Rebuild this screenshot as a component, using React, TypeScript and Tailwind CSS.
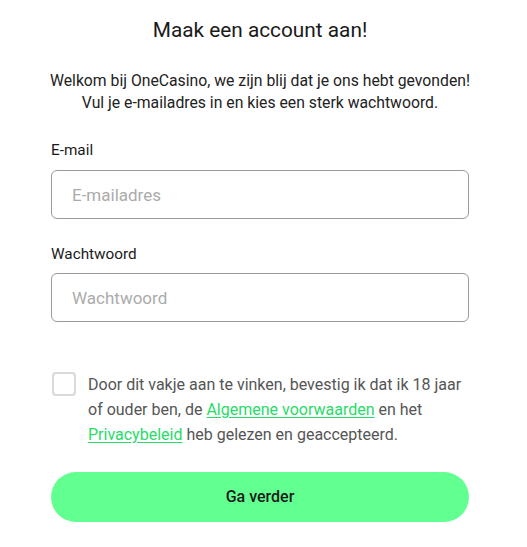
import React from 'react';

export default function App() {
  return (
    <div className="min-h-[547px] w-[527px] bg-white font-['Roboto',sans-serif]">
      <div className="ml-[51px] w-[418px] pt-4">
        <h1 className="text-center text-[20.8px] leading-[28px] text-[#1a1a1a]">Maak een account aan!</h1>

        <p className="-mx-6 mt-[26px] whitespace-nowrap text-center text-[15.75px] leading-[22px] text-[#222]">
          Welkom bij OneCasino, we zijn blij dat je ons hebt gevonden!
          <br />
          Vul je e-mailadres in en kies een sterk wachtwoord.
        </p>

        <form className="mt-[25px]" onSubmit={(e) => e.preventDefault()}>
          <label className="block text-[15.3px] leading-[22px] text-[#1a1a1a]">E-mail</label>
          <input
            type="email"
            placeholder="E-mailadres"
            className="mt-[9px] block h-[49px] w-full rounded-[6px] border border-[#9a9a9a] px-5 text-[17px] text-[#222] outline-none placeholder:text-[#ababab]"
          />

          <label className="mt-[24px] block text-[15.3px] leading-[22px] text-[#1a1a1a]">Wachtwoord</label>
          <input
            type="password"
            placeholder="Wachtwoord"
            className="mt-2 block h-[49px] w-full rounded-[6px] border border-[#9a9a9a] px-5 text-[17px] text-[#222] outline-none placeholder:text-[#ababab]"
          />

          {/* Terms checkbox */}
          <div className="mt-[50px] flex items-start gap-3 pl-[1px]">
            <span className="block h-6 w-6 shrink-0 rounded-[4px] border-2 border-[#d9d9d9] bg-white" />
            <p className="text-[16px] leading-[25px] text-[#555]">
              Door dit vakje aan te vinken, bevestig ik dat ik 18 jaar of ouder ben, de{' '}
              <a href="#" className="text-[#27dc68] underline underline-offset-2">Algemene voorwaarden</a> en het{' '}
              <a href="#" className="text-[#27dc68] underline underline-offset-2">Privacybeleid</a> heb gelezen en geaccepteerd.
            </p>
          </div>

          <button
            type="submit"
            className="mt-[25px] block h-[50px] w-full rounded-full bg-[#62ff91] text-[16px] font-medium text-[#1a1a1a]"
          >
            Ga verder
          </button>
        </form>
      </div>
    </div>
  );
}
